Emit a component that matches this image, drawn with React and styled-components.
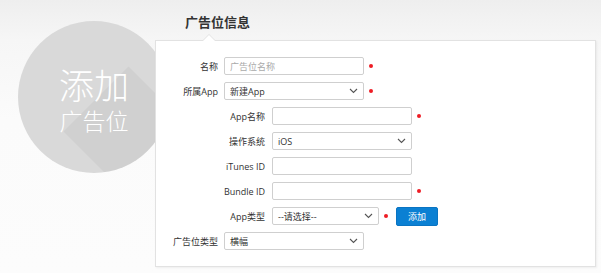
import React from 'react'
import styled, { createGlobalStyle } from 'styled-components'

const GlobalStyle = createGlobalStyle`
  html, body {
    margin: 0;
    padding: 0;
  }
  body {
    width: 601px;
    height: 273px;
    overflow: hidden;
    background: linear-gradient(#eeeeee 0, #f6f6f6 40px, #fbfbfb 120px, #fcfcfc 100%);
    font-family: "Open Sans", "Noto Sans CJK SC", sans-serif;
    color: #333;
  }
`

function Chevron() {
  return (
    <svg width="9" height="6" viewBox="0 0 9 6">
      <path d="M1 1 L4.5 4.5 L8 1" fill="none" stroke="#555" strokeWidth="1.1" />
    </svg>
  )
}

function Field({ label, indent, children, required }) {
  return (
    <StRow>
      <StLabel indent={indent}>{label}</StLabel>
      {children}
      {required && <StDot />}
    </StRow>
  )
}

function App() {
  return (
    <StPage>
      <GlobalStyle />
      <StBadge>
        <StBadgeBig>添加</StBadgeBig>
        <StBadgeSmall>广告位</StBadgeSmall>
      </StBadge>
      <StMain>
        <StTitle>广告位信息</StTitle>
        <StCard>
          <Field label="名称" required>
            <StInput placeholder="广告位名称" />
          </Field>
          <Field label="所属App" required>
            <StSelect>
              <span>新建App</span>
              <Chevron />
            </StSelect>
          </Field>
          <Field label="App名称" indent required>
            <StInput />
          </Field>
          <Field label="操作系统" indent>
            <StSelect>
              <span>iOS</span>
              <Chevron />
            </StSelect>
          </Field>
          <Field label="iTunes ID" indent>
            <StInput />
          </Field>
          <Field label="Bundle ID" indent required>
            <StInput />
          </Field>
          <StRow>
            <StLabel indent>App类型</StLabel>
            <StSelect width={107}>
              <span>--请选择--</span>
              <Chevron />
            </StSelect>
            <StDot />
            <StBtn>添加</StBtn>
          </StRow>
          <Field label="广告位类型">
            <StSelect>
              <span>横幅</span>
              <Chevron />
            </StSelect>
          </Field>
        </StCard>
      </StMain>
    </StPage>
  )
}

export default App

const StPage = styled.div`
  display: flex;
  align-items: flex-start;
  padding-left: 18px;
`
const StBadge = styled.div`
  position: relative;
  box-sizing: border-box;
  flex-shrink: 0;
  width: 152px;
  height: 152px;
  margin-top: 21px;
  padding-top: 4px;
  border-radius: 50%;
  overflow: hidden;
  background: #d9d9d9;
  display: flex;
  flex-direction: column;
  align-items: center;
  justify-content: center;
  gap: 3px;
  color: #fff;
  font-family: "Noto Sans CJK SC", sans-serif;
  font-weight: 300;

  &::after {
    content: "";
    position: absolute;
    left: 78px;
    top: 78px;
    width: 160px;
    height: 92px;
    background: rgba(0, 0, 0, 0.04);
    transform-origin: 0 50%;
    transform: translateY(-50%) rotate(45deg);
  }
`
const StBadgeBig = styled.div`
  position: relative;
  z-index: 1;
  font-size: 35px;
  line-height: 38px;
`
const StBadgeSmall = styled.div`
  position: relative;
  z-index: 1;
  font-size: 23px;
  line-height: 28px;
`
const StMain = styled.div`
  position: relative;
  z-index: 1;
  margin-left: -15px;
  padding-top: 11px;
`
const StTitle = styled.h1`
  margin: 0 0 8px 30px;
  font-family: "Noto Sans CJK SC", sans-serif;
  font-size: 13px;
  line-height: 21px;
  font-weight: 700;
  color: #333;
`
const StCard = styled.div`
  position: relative;
  box-sizing: border-box;
  width: 441px;
  height: 227px;
  padding-top: 16px;
  background: #fff;
  border: 1px solid #e2e2e2;
  box-shadow: 1px 1px 2px rgba(0, 0, 0, 0.06);
  display: flex;
  flex-direction: column;
  gap: 7px;

  &::before,
  &::after {
    content: "";
    position: absolute;
    left: 46px;
    width: 0;
    height: 0;
    border-left: 7px solid transparent;
    border-right: 7px solid transparent;
  }
  &::before {
    top: -7px;
    border-bottom: 7px solid #e2e2e2;
  }
  &::after {
    top: -6px;
    border-bottom: 7px solid #fff;
  }
`
const StRow = styled.div`
  display: flex;
  align-items: center;
  height: 18px;
`
const StLabel = styled.label`
  box-sizing: border-box;
  width: ${(p) => (p.indent ? 116 : 68)}px;
  padding-right: ${(p) => (p.indent ? 7 : 6)}px;
  text-align: right;
  font-size: 9px;
  color: #333;
  white-space: nowrap;
`
const StInput = styled.input`
  box-sizing: border-box;
  width: 140px;
  height: 18px;
  padding: 0 5px;
  border: 1px solid #cfcfcf;
  border-radius: 2px;
  font-family: inherit;
  font-size: 9px;
  color: #333;
  outline: none;

  &::placeholder {
    color: #aaa;
  }
`
const StSelect = styled.div`
  box-sizing: border-box;
  width: ${(p) => p.width || 140}px;
  height: 18px;
  padding: 0 5px;
  border: 1px solid #cfcfcf;
  border-radius: 2px;
  background: #fff;
  display: flex;
  align-items: center;
  justify-content: space-between;
  font-size: 9px;
  color: #333;
`
const StDot = styled.span`
  flex-shrink: 0;
  width: 4px;
  height: 4px;
  margin-left: 5px;
  border-radius: 50%;
  background: #ee1c24;
`
const StBtn = styled.button`
  box-sizing: border-box;
  width: 42px;
  height: 19px;
  margin-left: 8px;
  padding: 0;
  border: 1px solid #0a74c2;
  border-radius: 2px;
  background: #0b80d3;
  color: #fff;
  font-family: "Noto Sans CJK SC", sans-serif;
  font-size: 9px;
`
